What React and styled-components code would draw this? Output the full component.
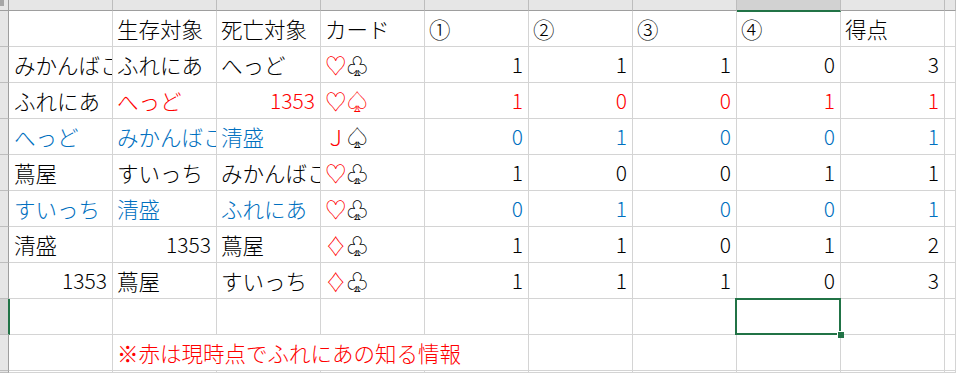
import React from "react";
import styled, { createGlobalStyle, css } from "styled-components";

const Global = createGlobalStyle`
  html, body { margin: 0; padding: 0; background: #fff; overflow: hidden; }
  body { font-family: "Noto Sans CJK JP", "Noto Sans", sans-serif; }
`;

const RED = "#ff0000";
const BLUE = "#0070c0";
const GRID = "#d4d4d4";
const HEAD_BG = "#e6e6e6";
const HEAD_SEL = "#d2d2d2";
const HEAD_LINE = "#9e9e9e";
const GREEN = "#217346";

const Sheet = styled.div`
  display: grid;
  grid-template-columns: 9px repeat(9, 104px) 1fr;
  grid-template-rows: 11px repeat(10, 36px) 1fr;
  width: 956px;
  height: 373px;
  overflow: hidden;
  background: #fff;
`;

const Corner = styled.div`
  position: relative;
  background: ${HEAD_BG};
  border-right: 1px solid ${HEAD_LINE};
  border-bottom: 1px solid ${HEAD_LINE};
  &::before {
    content: "";
    position: absolute;
    left: 0;
    top: 0;
    width: 4px;
    height: 6px;
    background: #a6a6a6;
  }
`;

const ColHead = styled.div`
  background: ${(p) => (p.$selected ? HEAD_SEL : HEAD_BG)};
  border-right: 1px solid #bdbdbd;
  border-bottom: ${(p) => (p.$selected ? `2px solid ${GREEN}` : `1px solid ${HEAD_LINE}`)};
  margin-bottom: ${(p) => (p.$selected ? "-1px" : "0")};
  position: relative;
  z-index: 1;
`;

const RowHead = styled.div`
  background: ${(p) => (p.$selected ? HEAD_SEL : HEAD_BG)};
  border-bottom: 1px solid #bdbdbd;
  border-right: ${(p) => (p.$selected ? `2px solid ${GREEN}` : `1px solid ${HEAD_LINE}`)};
  margin-right: ${(p) => (p.$selected ? "-1px" : "0")};
  position: relative;
  z-index: 1;
`;

const Cell = styled.div`
  position: relative;
  display: flex;
  align-items: center;
  justify-content: ${(p) => (p.$right ? "flex-end" : "flex-start")};
  padding: 0 ${(p) => (p.$right ? "5px" : "0")} 0 ${(p) => (p.$right ? "0" : "4px")};
  border-right: 1px solid ${GRID};
  border-bottom: 1px solid ${GRID};
  font-size: 21.5px;
  font-weight: 300;
  line-height: 1;
  color: ${(p) => p.$color || "#000"};
  white-space: nowrap;
  overflow: hidden;
  ${(p) =>
    p.$span &&
    css`
      grid-column: span ${p.$span};
      overflow: visible;
    `}
  ${(p) =>
    p.$first &&
    css`
      padding-left: 5px;
    `}
  ${(p) =>
    p.$active &&
    css`
      overflow: visible;
      z-index: 3;
    `}
`;

const Num = styled.span`
  font-family: "Noto Sans CJK JP", "Noto Sans", sans-serif;
  font-size: 21px;
  font-weight: 300;
`;

const Selection = styled.div`
  position: absolute;
  left: -2px;
  top: -1px;
  right: -1px;
  bottom: -1px;
  border: 2px solid ${GREEN};
  pointer-events: none;
  &::after {
    content: "";
    position: absolute;
    right: -5px;
    bottom: -5px;
    width: 6px;
    height: 6px;
    background: ${GREEN};
    border-top: 1px solid #fff;
    border-left: 1px solid #fff;
  }
`;

const Suit = styled.span`
  color: ${(p) => p.$color || "#000"};
  font-weight: 300;
`;

const COLS = 10;

const headers = ["", "生存対象", "死亡対象", "カード", "①", "②", "③", "④", "得点"];

const R = "r";
const B = "b";
const K = "k";
const colorOf = (c) => (c === R ? RED : c === B ? BLUE : "#000");

const rows = [
  { c: K, cells: ["みかんばこ", "ふれにあ", "へっど"], card: [["♡", R], ["♧", K]], nums: [1, 1, 1, 0, 3] },
  { c: R, cells: [["ふれにあ", K], "へっど", 1353], card: [["♡", R], ["♤", R]], nums: [1, 0, 0, 1, 1] },
  { c: B, cells: ["へっど", "みかんばこ", "清盛"], card: [["Ｊ", R], ["♤", K]], nums: [0, 1, 0, 0, 1] },
  { c: K, cells: ["蔦屋", "すいっち", "みかんばこ"], card: [["♡", R], ["♧", K]], nums: [1, 0, 0, 1, 1] },
  { c: B, cells: ["すいっち", "清盛", "ふれにあ"], card: [["♡", R], ["♧", K]], nums: [0, 1, 0, 0, 1] },
  { c: K, cells: ["清盛", 1353, "蔦屋"], card: [["♢", R], ["♧", K]], nums: [1, 1, 0, 1, 2] },
  { c: K, cells: [1353, "蔦屋", "すいっち"], card: [["♢", R], ["♧", K]], nums: [1, 1, 1, 0, 3] },
];

function renderValue(v, rowColor, key, first) {
  let value = v;
  let color = rowColor;
  if (Array.isArray(v)) {
    value = v[0];
    color = colorOf(v[1]);
  }
  const isNum = typeof value === "number";
  return (
    <Cell key={key} $right={isNum} $color={color} $first={first}>
      {isNum ? <Num>{value}</Num> : value}
    </Cell>
  );
}

function EmptyCells({ from, count, prefix, selectedIndex }) {
  return Array.from({ length: count }, (_, i) => {
    const active = selectedIndex === from + i;
    return (
      <Cell key={`${prefix}-${from + i}`} $active={active}>
        {active ? <Selection /> : null}
      </Cell>
    );
  });
}

export default function App() {
  return (
    <>
      <Global />
      <Sheet>
        <Corner />
        {Array.from({ length: COLS }, (_, i) => (
          <ColHead key={`ch${i}`} $selected={i === 7} />
        ))}

        <RowHead />
        {headers.map((h, i) => (
          <Cell key={`h${i}`} $first={i === 0}>
            {h}
          </Cell>
        ))}
        <Cell key="h-extra" />

        {rows.map((row, ri) => {
          const rc = colorOf(row.c);
          return (
            <React.Fragment key={`row${ri}`}>
              <RowHead />
              {row.cells.map((v, ci) => renderValue(v, rc, `c${ri}-${ci}`, ci === 0))}
              <Cell key={`card${ri}`}>
                {row.card.map(([g, c], gi) => (
                  <Suit key={gi} $color={colorOf(c)}>
                    {g}
                  </Suit>
                ))}
              </Cell>
              {row.nums.map((n, ni) => (
                <Cell key={`n${ri}-${ni}`} $right $color={rc}>
                  <Num>{n}</Num>
                </Cell>
              ))}
              <Cell key={`x${ri}`} />
            </React.Fragment>
          );
        })}

        <RowHead $selected />
        <EmptyCells from={0} count={COLS} prefix="r9" selectedIndex={7} />

        <RowHead />
        <Cell key="n10a" />
        <Cell $span={4} $color={RED}>
          ※赤は現時点でふれにあの知る情報
        </Cell>
        <EmptyCells from={5} count={5} prefix="r10" />

        <RowHead />
        <EmptyCells from={0} count={COLS} prefix="r11" />
      </Sheet>
    </>
  );
}
